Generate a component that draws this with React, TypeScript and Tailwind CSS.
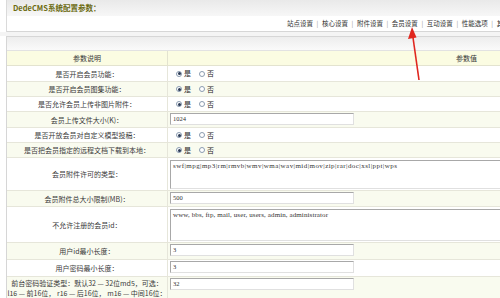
import React from "react";

type Row = {
  label: React.ReactNode;
  kind: "radio" | "input" | "area";
  value?: string;
  h: string;
  alt: boolean;
  boxH?: string;
  track?: string;
};

const navItems = ["站点设置", "核心设置", "附件设置", "会员设置", "互动设置", "性能选项", "其它"];

const rows: Row[] = [
  { label: "是否开启会员功能：", kind: "radio", h: "h-[16px]", alt: false },
  { label: "是否开启会员图集功能：", kind: "radio", h: "h-[15px]", alt: true },
  { label: "是否允许会员上传非图片附件：", kind: "radio", h: "h-[15px]", alt: false },
  { label: "会员上传文件大小(K)：", kind: "input", value: "1024", h: "h-[16px]", alt: true },
  { label: "是否开放会员对自定义模型投稿：", kind: "radio", h: "h-[15px]", alt: false },
  { label: "是否把会员指定的远程文档下载到本地：", kind: "radio", h: "h-[15px]", alt: true },
  {
    label: "会员附件许可的类型：",
    kind: "area",
    value: "swf|mpg|mp3|rm|rmvb|wmv|wma|wav|mid|mov|zip|rar|doc|xsl|ppt|wps",
    h: "h-[33px]",
    alt: false,
    boxH: "h-[29px]",
    track: "tracking-[0.45px]",
  },
  { label: "会员附件总大小限制(MB)：", kind: "input", value: "500", h: "h-[16px]", alt: true },
  {
    label: "不允许注册的会员id：",
    kind: "area",
    value: "www, bbs, ftp, mail, user, users, admin, administrator",
    h: "h-[36px]",
    alt: false,
    boxH: "h-[32px]",
    track: "tracking-[0.1px]",
  },
  { label: "用户id最小长度：", kind: "input", value: "3", h: "h-[17px]", alt: true },
  { label: "用户密码最小长度：", kind: "input", value: "3", h: "h-[17px]", alt: false },
  {
    label: (
      <>
        <span>前台密码验证类型：默认32 — 32位md5，可选：</span>
        <span>l16 — 前16位， r16 — 后16位， m16 — 中间16位：</span>
      </>
    ),
    kind: "input",
    value: "32",
    h: "h-[23px]",
    alt: true,
  },
];

const Radio = ({ on }: { on: boolean }) => (
  <span className="inline-flex items-center justify-center w-[6px] h-[6px] rounded-full border border-[#8a9bb0] bg-white">
    {on && <span className="w-[3px] h-[3px] rounded-full bg-[#2a3a55]" />}
  </span>
);

const Field = ({ row }: { row: Row }) => {
  if (row.kind === "radio") {
    return (
      <div className="flex items-center gap-[2px] pl-[8px] text-[7px] text-[#222]">
        <Radio on />
        <span className="mr-[6px]">是</span>
        <Radio on={false} />
        <span>否</span>
      </div>
    );
  }
  if (row.kind === "input") {
    return (
      <div className="pl-[2px] pt-[1px]">
        <div className="w-[184px] h-[12px] bg-white border border-[#a8a8a8] border-r-[#e0e0e0] border-b-[#e0e0e0] flex items-center pl-[2px] font-['Liberation_Serif'] text-[6.5px] text-[#333]">
          {row.value}
        </div>
      </div>
    );
  }
  return (
    <div className="pl-[2px] pt-[2px]">
      <div
        className={`${row.boxH} ${row.track} w-[340px] bg-white border border-[#a8a8a8] border-r-[#e0e0e0] border-b-[#e0e0e0] pl-[2px] pt-[1px] font-['Liberation_Serif'] text-[7px] leading-[9px] text-[#333] whitespace-nowrap`}
      >
        {row.value}
      </div>
    </div>
  );
};

export default function App() {
  return (
    <div className="relative w-[500px] h-[298px] overflow-hidden bg-white font-['Noto_Sans_CJK_SC',sans-serif] text-[#333]">
      {/* top title box */}
      <div className="ml-[6px] border-l border-[#dadada]">
        <div className="h-[16px] bg-gradient-to-b from-[#e9e9e9] to-[#f7f7f7] flex items-center pl-[6px] text-[7.5px] font-bold text-[#6b6b10] leading-none">
          DedeCMS系统配置参数：
        </div>
        <div className="h-[16px] border-b border-[#d6d6d6] bg-white flex items-center pl-[280px] whitespace-nowrap text-[6.5px] leading-none text-[#333]">
          {navItems.map((n, i) => (
            <span key={n} className="flex items-center shrink-0">
              {i > 0 && <span className="mx-[3.6px] text-[#999]">|</span>}
              <span>{n}</span>
            </span>
          ))}
        </div>
      </div>

      <div className="h-[4px] bg-[#f4f4f4]" />

      {/* settings table */}
      <div className="ml-[6px] border-l border-t border-[#d6d6d6]">
        <div className="h-[14px] bg-gradient-to-b from-[#ededed] to-[#fafafa] border-b border-[#e2e2e2]" />
        <div className="h-[15px] grid grid-cols-[161px_1fr] bg-[#fbfce2] border-b border-[#e3e3cf] text-[7px] leading-none text-[#333]">
          <div className="flex items-center justify-center border-r border-[#e3e3cf]">参数说明</div>
          <div className="flex items-center pl-[288px]">参数值</div>
        </div>
        {rows.map((r, i) => (
          <div
            key={i}
            className={`${r.h} grid grid-cols-[161px_1fr] border-b border-[#e6e6da] ${
              r.alt ? "bg-[#f9fbef]" : "bg-white"
            }`}
          >
            <div className="flex flex-col items-center justify-center border-r border-[#e6e6da] text-[7px] leading-[10px] text-[#3a3a3a] whitespace-nowrap">
              {r.label}
            </div>
            <div className={r.kind === "radio" ? "flex items-center" : ""}>
              <Field row={r} />
            </div>
          </div>
        ))}
      </div>

      {/* red arrow annotation */}
      <svg className="absolute left-[400px] top-[22px]" width="30" height="66" viewBox="0 0 30 66">
        <line x1="19" y1="58" x2="12.5" y2="12" stroke="#e0261e" strokeWidth="1.6" />
        <polygon points="12,5 8,17 16.5,15.5" fill="#e0261e" />
      </svg>
    </div>
  );
}
